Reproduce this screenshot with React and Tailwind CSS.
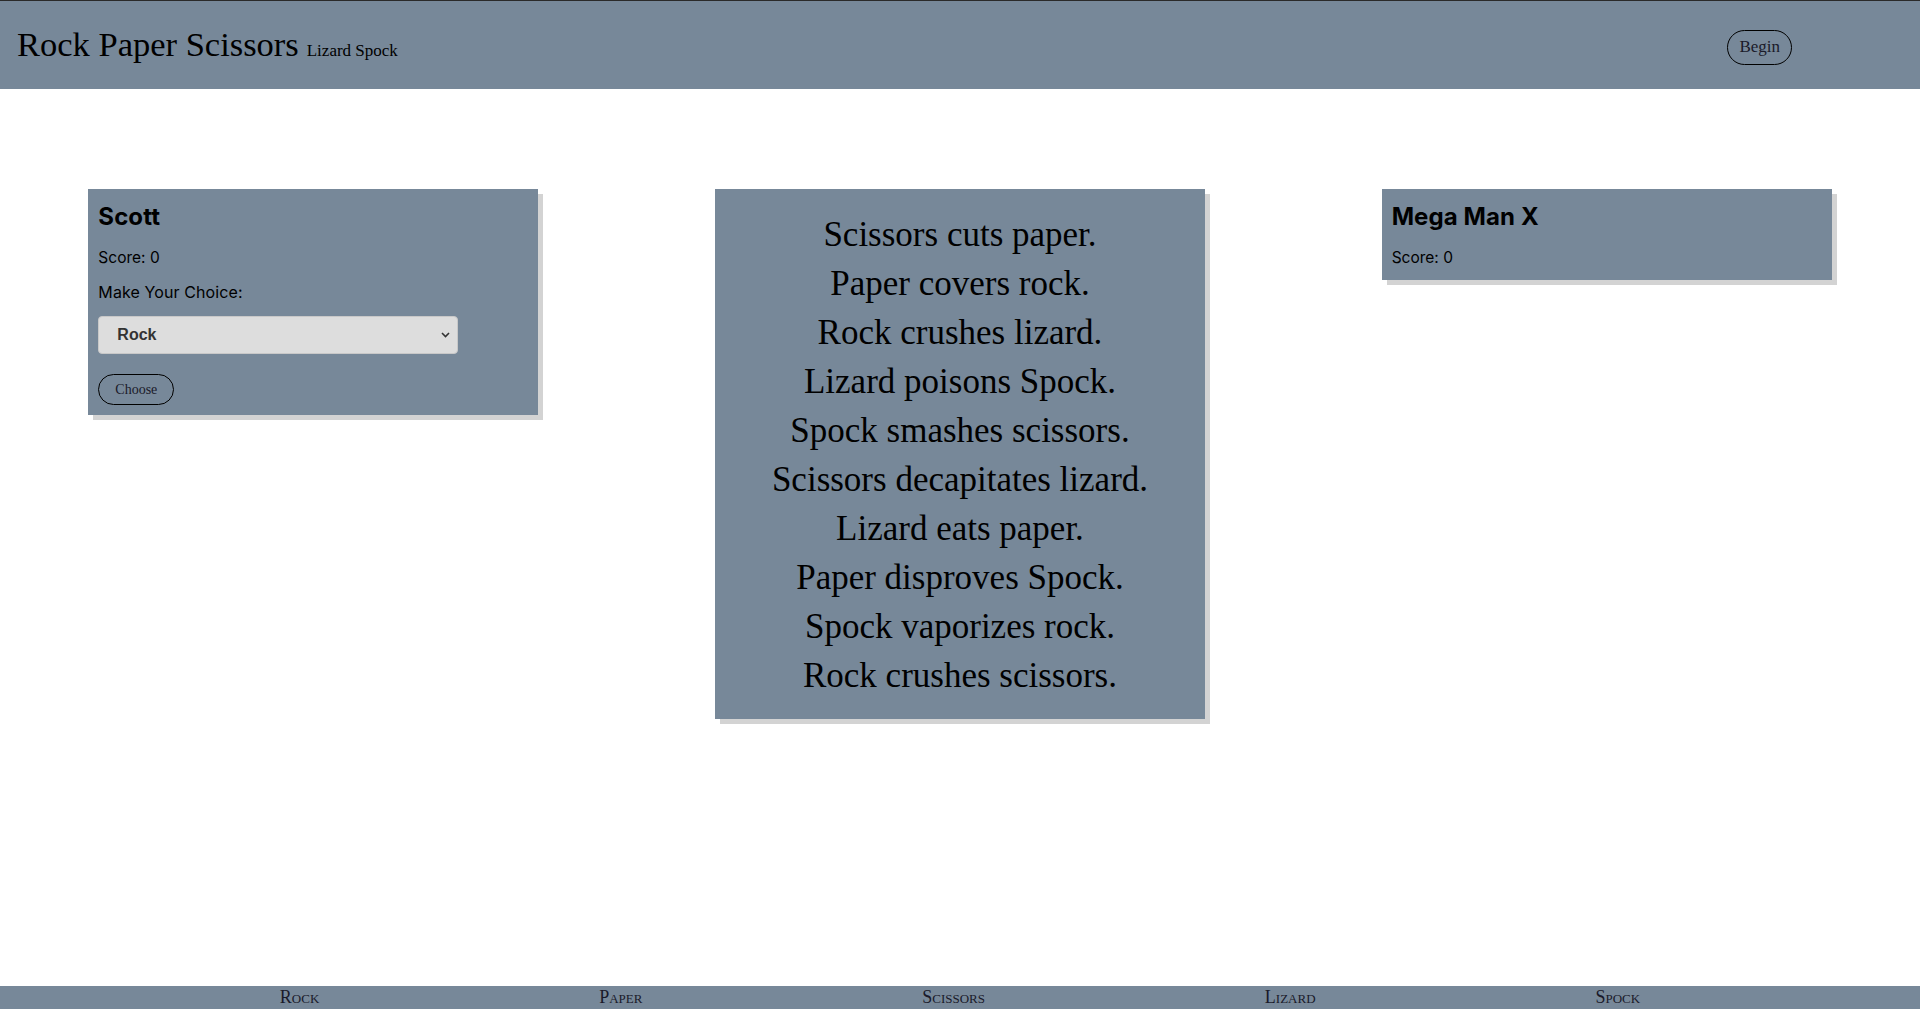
import React, { useState } from 'react';

const rules = [
  'Scissors cuts paper.',
  'Paper covers rock.',
  'Rock crushes lizard.',
  'Lizard poisons Spock.',
  'Spock smashes scissors.',
  'Scissors decapitates lizard.',
  'Lizard eats paper.',
  'Paper disproves Spock.',
  'Spock vaporizes rock.',
  'Rock crushes scissors.',
];

const choices = ['Rock', 'Paper', 'Scissors', 'Lizard', 'Spock'];

const serif = "font-['Liberation_Serif',serif]";
const sans = "font-['Inter','Noto_Sans',sans-serif]";

function PlayerCard({ name, score, children }) {
  return (
    <div className={`w-[450px] bg-[#778899] px-[10px] pt-[12px] pb-[10px] shadow-[5px_5px_0_#d3d3d3] text-black ${sans}`}>
      <h2 className="text-[24px] leading-[32px] font-bold tracking-[0.1px]">{name}</h2>
      <p className="mt-[13px] text-[15.5px] leading-[24px]">Score: {score}</p>
      {children}
    </div>
  );
}

export default function App() {
  const [choice, setChoice] = useState('Rock');

  return (
    <div className="min-h-screen flex flex-col bg-white">
      {/* Header */}
      <header className="h-[89px] border-t border-[#2a2a2a] bg-[#778899] flex items-center justify-between pl-[17px] pr-[128px]">
        <h1 className={`${serif} text-black flex items-baseline gap-[8px] -mt-[1px]`}>
          <span className="text-[34.5px]">Rock Paper Scissors</span>
          <span className="text-[17px]">Lizard Spock</span>
        </h1>
        <button className={`${serif} h-[35px] px-[11px] rounded-full border border-black text-[17px] text-[#1a1a2a] mt-[4px]`}>
          Begin
        </button>
      </header>

      {/* Main */}
      <main className="flex-1 flex justify-around items-start pt-[100px]">
        <PlayerCard name="Scott" score={0}>
          <p className="mt-[10px] text-[16px] leading-[24px] tracking-[0.1px]">Make Your Choice:</p>
          <div className="relative mt-[12px] w-[360px]">
            <select
              value={choice}
              onChange={(e) => setChoice(e.target.value)}
              className="appearance-none w-full h-[38px] rounded-[4px] border border-[#c8c8c8] bg-[#dddddd] pl-[18px] text-[16px] font-bold text-[#333] font-['Liberation_Sans',Arial,sans-serif]"
            >
              {choices.map((c) => (
                <option key={c}>{c}</option>
              ))}
            </select>
            <svg className="absolute right-[8px] top-[16px] pointer-events-none" width="9" height="6" viewBox="0 0 9 6">
              <path d="M1 1l3.5 3.5L8 1" fill="none" stroke="#333" strokeWidth="1.6" />
            </svg>
          </div>
          <button className={`${serif} mt-[20px] h-[31px] w-[76px] rounded-full border border-black text-[14px] text-[#1a1a2a]`}>
            Choose
          </button>
        </PlayerCard>

        <div className={`w-[490px] bg-[#778899] pt-[21px] pb-[19px] shadow-[5px_5px_0_#d3d3d3] text-center text-black ${serif}`}>
          {rules.map((r) => (
            <p key={r} className="text-[35px] leading-[49px]">{r}</p>
          ))}
        </div>

        <PlayerCard name="Mega Man X" score={0} />
      </main>

      {/* Footer */}
      <footer className={`h-[23px] bg-[#778899] flex justify-evenly items-center ${serif} text-[18px] text-[#1a1a2a] [font-variant:small-caps]`}>
        {choices.map((c) => (
          <span key={c}>{c}</span>
        ))}
      </footer>
    </div>
  );
}
